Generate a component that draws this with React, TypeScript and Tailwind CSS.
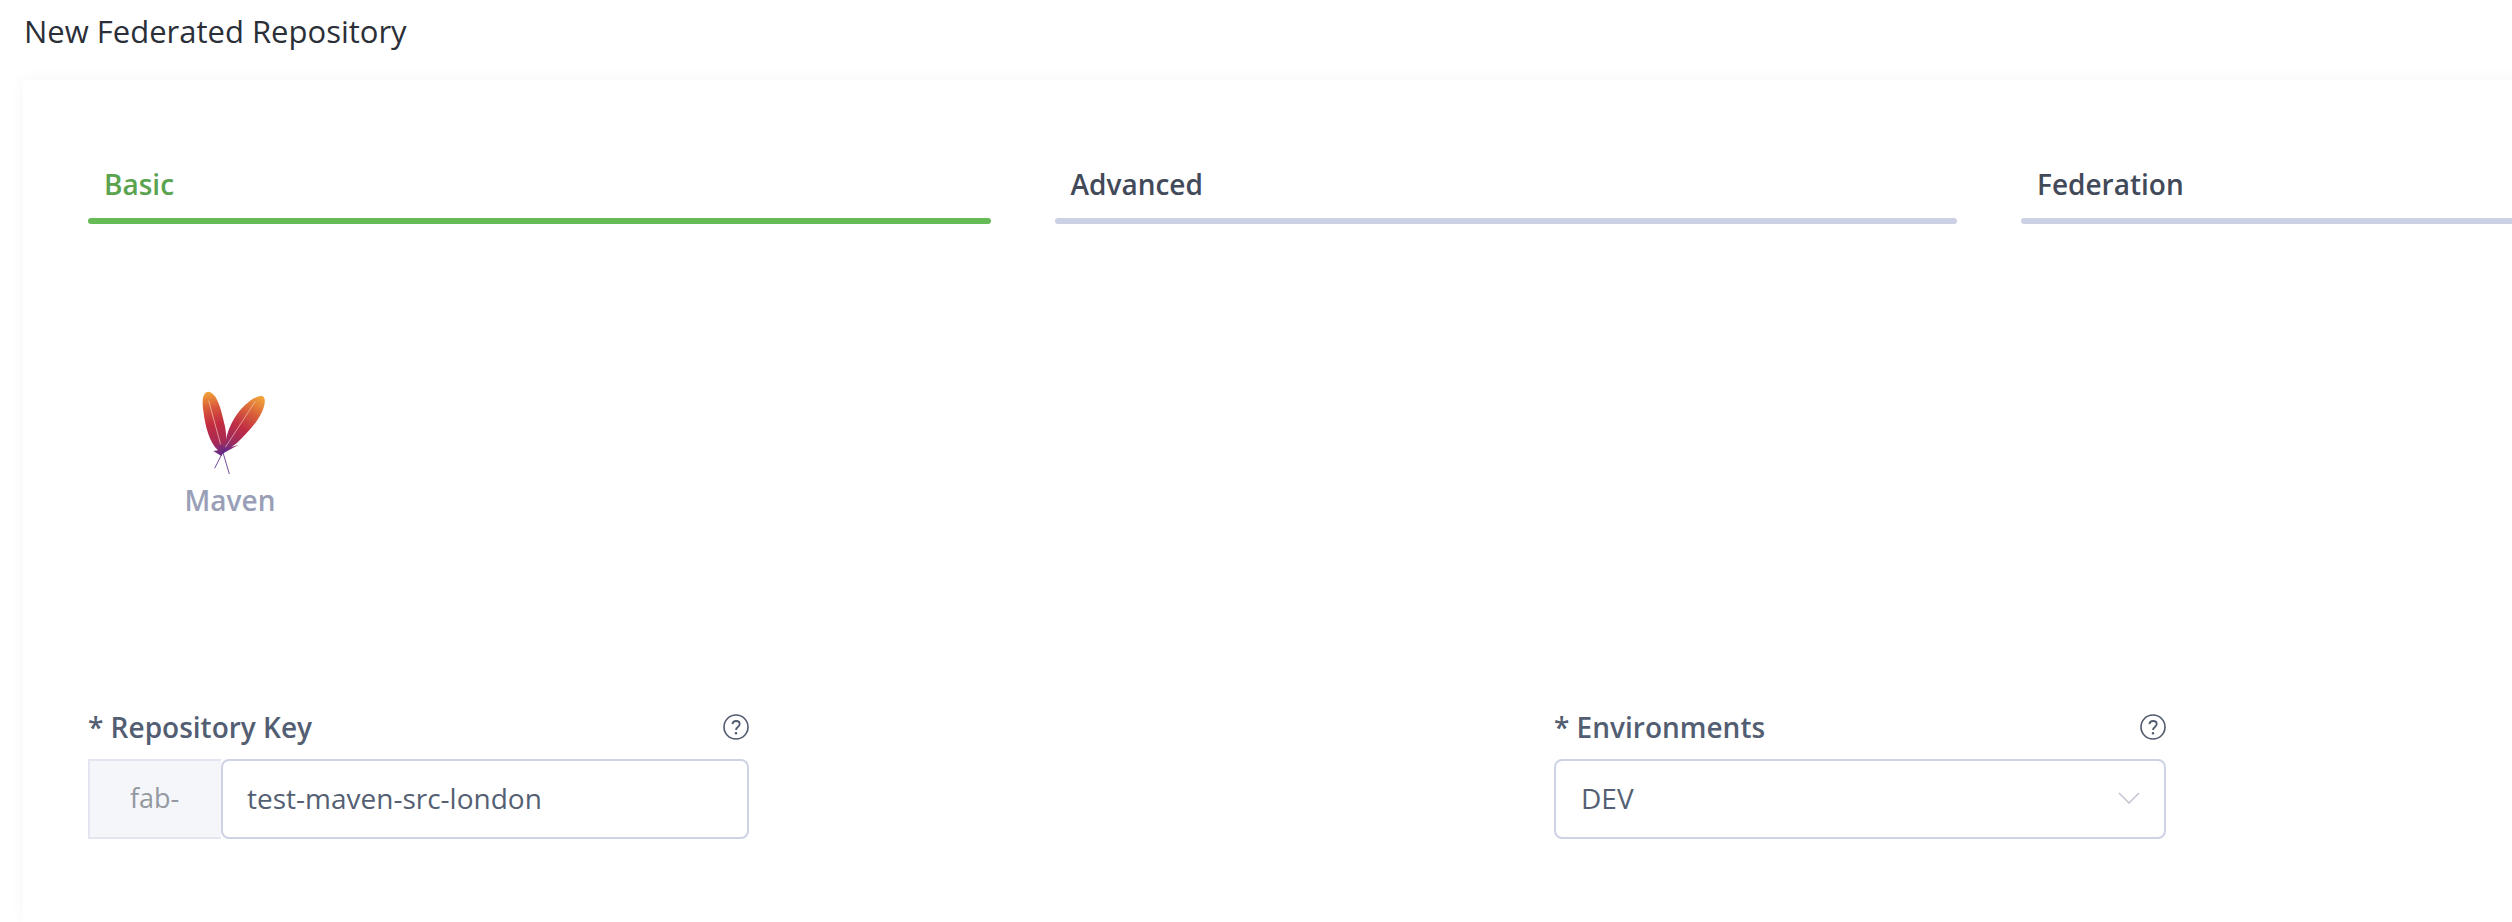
import React from "react";

const HelpIcon = () => (
  <svg viewBox="0 0 26 26" className="h-[26px] w-[26px] shrink-0 text-[#4f5a6e]" fill="none" stroke="currentColor">
    <circle cx="13" cy="13" r="12" strokeWidth="1.6" />
    <path d="M9.4 10.2c.3-2 1.8-3.2 3.7-3.2 2.1 0 3.6 1.3 3.6 3.1 0 2.9-3.7 2.9-3.7 5.9" strokeWidth="1.8" />
    <circle cx="13" cy="19.2" r="1.2" fill="currentColor" stroke="none" />
  </svg>
);

const MavenLogo = () => (
  <svg viewBox="120 60 210 258" className="ml-[10px] h-[86px] w-[70px]">
    <defs>
      <linearGradient id="featherLeft" gradientUnits="userSpaceOnUse" x1="145" y1="65" x2="185" y2="258">
        <stop offset="0" stopColor="#f2a43a" />
        <stop offset="0.25" stopColor="#d9583a" />
        <stop offset="0.5" stopColor="#c22c40" />
        <stop offset="0.78" stopColor="#a82a55" />
        <stop offset="1" stopColor="#5f2a8e" />
      </linearGradient>
      <linearGradient id="featherRight" gradientUnits="userSpaceOnUse" x1="300" y1="78" x2="195" y2="250">
        <stop offset="0" stopColor="#f2a43a" />
        <stop offset="0.28" stopColor="#d9603a" />
        <stop offset="0.55" stopColor="#bf2c44" />
        <stop offset="0.8" stopColor="#9c2a5e" />
        <stop offset="1" stopColor="#5f2a8e" />
      </linearGradient>
    </defs>
    <path d="M302 78C280 80 248 108 226 140C210 165 198 195 196 226L186 252L236 224L214 231L230 220C256 194 288 164 306 126C316 104 320 76 302 78Z" fill="url(#featherRight)" />
    <path d="M146 65C126 66 126 95 130 122C136 172 148 215 174 241L160 243L184 258L194 240C202 215 199 190 194 165C186 130 174 70 146 65Z" fill="url(#featherLeft)" />
    <path d="M146 92L182 224" stroke="#f3cfc0" strokeWidth="2" fill="none" />
    <path d="M182 224L208 312" stroke="#5b2a86" strokeWidth="2.5" fill="none" />
    <path d="M286 94L196 232" stroke="#f3cfc0" strokeWidth="2" fill="none" />
    <path d="M196 232L164 295" stroke="#5b2a86" strokeWidth="2.5" fill="none" />
  </svg>
);

const tabs = [
  { name: "Basic", active: true },
  { name: "Advanced", active: false },
  { name: "Federation", active: false },
];

export default function App() {
  return (
    <div className="h-[922px] w-[2512px] overflow-hidden bg-white font-['Open_Sans',sans-serif]">
      <h1 className="h-[80px] pl-[24px] pt-[11px] text-[31px] leading-[40px] font-normal text-[#2b2f38]">
        New Federated Repository
      </h1>
      <div className="ml-[23px] h-[842px] w-[2600px] bg-white pl-[65px] pt-[85px] shadow-[0_0_16px_rgba(0,0,0,0.04)]">
        <div className="flex gap-[64px]">
          {tabs.map((tab) => (
            <div key={tab.name} className="w-[902.5px] shrink-0">
              <div
                className={
                  tab.active
                    ? "pl-[16px] text-[28px] leading-[38px] font-semibold text-[#5aa34f]"
                    : "pl-[16px] text-[28px] leading-[38px] font-semibold text-[#424959]"
                }
              >
                {tab.name}
              </div>
              <div className={tab.active ? "mt-[15px] h-[6px] rounded-full bg-[#66bb57]" : "mt-[15px] h-[6px] rounded-full bg-[#cbd0e3]"} />
            </div>
          ))}
        </div>

        <div className="ml-[30px] mt-[166px] flex w-[224px] flex-col items-center">
          <MavenLogo />
          <span className="mt-[5px] text-[28px] leading-[38px] font-semibold text-[#9a9fb8]">Maven</span>
        </div>

        <div className="mt-[191px] flex gap-[805px]">
          <div className="w-[661px] shrink-0">
            <div className="flex h-[34px] items-center justify-between">
              <span className="text-[28px] font-semibold text-[#535e72]">* Repository Key</span>
              <HelpIcon />
            </div>
            <div className="mt-[15px] flex h-[80px]">
              <div className="w-[133px] shrink-0 border-2 border-r-0 border-[#e3e6f0] bg-[#f5f6fa] pl-[40px] text-[27px] leading-[74px] text-[#94989f]">
                fab-
              </div>
              <div className="flex-1 rounded-[8px] border-2 border-[#cdd2e5] pl-[24px] text-[28px] leading-[74px] text-[#555f73]">
                test-maven-src-london
              </div>
            </div>
          </div>
          <div className="w-[612px] shrink-0">
            <div className="flex h-[34px] items-center justify-between">
              <span className="text-[28px] font-semibold text-[#535e72]">* Environments</span>
              <HelpIcon />
            </div>
            <div className="mt-[15px] flex h-[80px] items-center justify-between rounded-[8px] border-2 border-[#cdd2e5] pb-[2px] pl-[25px] pr-[24px] text-[28px] text-[#555f73]">
              <span>DEV</span>
              <svg viewBox="0 0 22 12" className="h-[12px] w-[22px]" fill="none" stroke="#c3c6d2" strokeWidth="1.5">
                <path d="M1 1l10 10L21 1" />
              </svg>
            </div>
          </div>
        </div>
      </div>
    </div>
  );
}
